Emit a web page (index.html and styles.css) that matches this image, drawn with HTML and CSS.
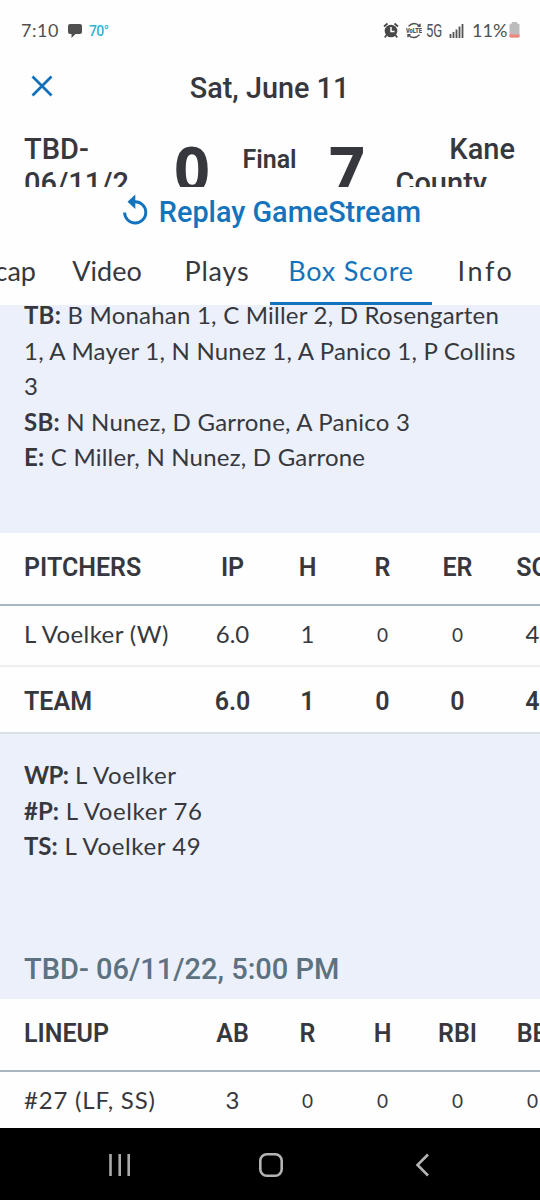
FILE: index.html
```html
<!DOCTYPE html>
<html lang="en">
<head>
<meta charset="utf-8">
<title>Box Score</title>
<link rel="stylesheet" href="styles.css">
</head>
<body>
<div class="phone">
  <header class="status">
    <span class="clock hand">7:10</span>
    <svg class="chat" width="16" height="16" viewBox="0 0 16 16"><path d="M3 1h10q2 0 2 2v6q0 2-2 2H8.500l-4 4v-4H3q-2 0-2-2V3q0-2 2-2z" fill="#505050"/></svg>
    <span class="temp">70°</span>
    <div class="status-right">
      <svg class="alarm" width="16" height="17" viewBox="0 0 16 17"><circle cx="8" cy="9" r="6.300" fill="#484848"/><path d="M1 4.500 4.500 1.500M15 4.500 11.500 1.500M3.500 13 1.800 15.500M12.500 13l1.700 2.500" stroke="#484848" stroke-width="1.700"/><path d="M8 5v4.500h3.500" fill="none" stroke="#fff" stroke-width="1.500"/></svg>
      <svg class="volte" width="16" height="17" viewBox="0 0 16 17"><path d="M2.500 4.200Q8-1.200 13.500 3.800M14 1.800v2.500h-2.500M13.500 12.800Q8 18.200 2.500 13.200M2 15.200v-2.500h2.500" fill="none" stroke="#505050" stroke-width="1.400"/><text x="0" y="10.800" textLength="16" lengthAdjust="spacingAndGlyphs" font-family="Roboto" font-size="6.500" font-weight="900" fill="#505050">VoLTE</text></svg>
      <span class="net">5G</span>
      <svg class="signal" width="15" height="15" viewBox="0 0 15 15"><path d="M1.500 15v-4M4.500 15V9M7.500 15V6.500M10.500 15V3.500M13.500 15V1" stroke="#555" stroke-width="1.800"/></svg>
      <span class="percent hand">11%</span>
      <svg class="battery" width="11" height="16" viewBox="0 0 11 16"><path d="M3 1.500V0h5v1.500h1q1.500 0 1.500 1.500v11.500q0 1-1.500 1H2q-1.500 0-1.500-1V3Q.5 1.500 2 1.500z" fill="#bcbcbc"/><path d="M.5 12.500h10v2q0 1-1.500 1H2q-1.500 0-1.500-1z" fill="#ef8478"/></svg>
    </div>
  </header>

  <div class="titlebar">
    <svg class="close" width="22" height="22" viewBox="0 0 22 22"><path d="M1.500 1.500 20.500 20.500M20.500 1.500 1.500 20.500" stroke="#1270b8" stroke-width="2.700"/></svg>
    <h1 class="title">Sat, June 11</h1>
  </div>

  <section class="score">
    <div class="team away">TBD-<br>06/11/2</div>
    <div class="runs">0</div>
    <div class="state">Final</div>
    <div class="runs">7</div>
    <div class="team home">Kane<br><span class="second">County</span></div>
  </section>

  <div class="replay">
    <svg class="replay-icon" width="26" height="31" viewBox="0 0 26 31"><path d="M2.600 18.500A10.600 10.600 0 1 0 13 7.800" fill="none" stroke="#1473bd" stroke-width="2.900"/><path d="M5.500 7.800 13.300.5v14.500z" fill="#1473bd"/></svg>
    <span class="replay-label">Replay GameStream</span>
  </div>

  <nav class="tabs hand">
    <span class="tab recap">Recap</span>
    <span class="tab video">Video</span>
    <span class="tab plays">Plays</span>
    <span class="tab active">Box Score</span>
    <span class="tab info">Info</span>
  </nav>

  <section class="notes batting hand">
    <div class="line l1"><b>TB:</b> B Monahan 1, C Miller 2, D Rosengarten</div>
    <div class="line l2">1, A Mayer 1, N Nunez 1, A Panico 1, P Collins</div>
    <div class="line">3</div>
    <div class="line l4"><b>SB:</b> N Nunez, D Garrone, A Panico 3</div>
    <div class="line l5"><b>E:</b> C Miller, N Nunez, D Garrone</div>
  </section>

  <section class="table">
    <div class="row head"><span class="name">PITCHERS</span><span>IP</span><span>H</span><span>R</span><span>ER</span><span>SO</span></div>
    <div class="row player hand"><span class="name voelker">L Voelker (W)</span><span class="decimal">6.0</span><span>1</span><span class="zero">0</span><span class="zero">0</span><span>4</span></div>
    <div class="row total"><span class="name">TEAM</span><span>6.0</span><span>1</span><span>0</span><span>0</span><span>4</span></div>
  </section>

  <section class="notes pitching hand">
    <div class="line p1"><b>WP:</b> L Voelker</div>
    <div class="line p2"><b>#P:</b> L Voelker 76</div>
    <div class="line p3"><b>TS:</b> L Voelker 49</div>
  </section>

  <h2 class="section-title">TBD- 06/11/22, 5:00 PM</h2>

  <section class="table lineup">
    <div class="row head"><span class="name">LINEUP</span><span>AB</span><span>R</span><span>H</span><span>RBI</span><span>BB</span></div>
    <div class="row player hand"><span class="name batter">#27 (LF, SS)</span><span>3</span><span class="zero">0</span><span class="zero">0</span><span class="zero">0</span><span class="zero">0</span></div>
  </section>

  <footer class="navbar">
    <svg width="24" height="24" viewBox="0 0 24 24"><path d="M2.500 1v22M11.700 1v22M20.700 1v22" stroke="#aaa" stroke-width="2.600"/></svg>
    <svg class="home-key" width="26" height="26" viewBox="0 0 26 26"><rect x="2.300" y="2.300" width="21.400" height="21.400" rx="6.500" fill="none" stroke="#b4b4b4" stroke-width="2.600"/></svg>
    <svg class="back-key" width="15" height="24" viewBox="0 0 15 24"><path d="M13 1.500 2.500 12 13 22.500" fill="none" stroke="#b4b4b4" stroke-width="2.600"/></svg>
  </footer>
</div>
</body>
</html>
```

FILE: styles.css
```css
* { box-sizing: border-box; }
body { margin: 0; background: #fefefe; color: #37383d; font-family: Roboto, sans-serif; }
.phone { width: 540px; height: 1200px; overflow: hidden; display: flex; flex-direction: column; background: #fefefe; white-space: nowrap; }
.phone > * { flex-shrink: 0; }
.hand { font-family: Lato, sans-serif; }
svg { display: block; flex: none; }

.status { height: 60px; display: flex; align-items: center; padding: 0 20px 0 21px; color: #505050; }
.clock { width: 46px; font-size: 18px; letter-spacing: 0.5px; }
.chat { margin-top: 1px; }
.temp { margin-left: 6px; padding-top: 2px; font-size: 14px; font-weight: 500; color: #32b2d3; letter-spacing: -0.6px; }
.status-right { margin-left: auto; display: flex; align-items: center; }
.volte { margin-left: 7px; }
.net { width: 16px; margin-left: 4px; font-size: 19px; transform: scaleX(0.69); transform-origin: left; }
.signal { margin-left: 7px; }
.percent { width: 35px; margin-left: 8px; font-size: 18px; }
.battery { margin-left: 2px; }

.titlebar { height: 60px; display: flex; align-items: center; padding: 0 31px 5px; }
.close { margin-top: -3px; }
.title { flex: 1; margin: 0 23px 0 0; text-align: center; font-size: 28.8px; font-weight: 500; }

.score { height: 67px; overflow: hidden; display: flex; padding: 12px 24px 0; }
.team { width: 127px; font-size: 29px; line-height: 34px; font-weight: 500; }
.home { text-align: right; }
.second { padding-right: 28px; }
.runs { width: 82px; font: 700 63px/71px "Noto Sans", sans-serif; text-align: center; }
.state { width: 73px; padding-top: 12px; font-size: 25px; line-height: 32px; font-weight: 600; text-align: center; }

.replay { height: 52px; display: flex; align-items: flex-start; justify-content: center; gap: 11px; padding: 7px 0 0 3px; color: #1473bd; font-size: 28.8px; line-height: 36px; font-weight: 500; }

.tabs { height: 66px; display: flex; font-size: 27px; line-height: 64px; }
.tab { height: 66px; text-align: center; }
.recap { width: 50px; padding-right: 14px; direction: rtl; }
.video { width: 114px; }
.plays { width: 106px; letter-spacing: 0.8px; }
.active { width: 162px; color: #1473bd; letter-spacing: 0.8px; border-bottom: 3px solid #1473bd; }
.info { width: 108px; letter-spacing: 2.6px; }

.notes { padding: 0 24px; background: #ebf0fa; font-size: 24px; line-height: 35.5px; letter-spacing: 0.22px; }
.batting { height: 228px; overflow: hidden; }
.batting .l1 { margin-top: -8px; }
.pitching { height: 200px; padding-top: 23px; letter-spacing: 0.6px; }
.pitching b { letter-spacing: -0.7px; }
.pitching .p2 b, .pitching .p3 b { letter-spacing: 0; }

.table { background: #fefefe; }
.row { display: grid; grid-template-columns: 171px repeat(5, 75px); padding-left: 24px; align-items: center; text-align: center; font-size: 25px; }
.name { text-align: left; }
.head { height: 73px; padding-bottom: 3px; font-weight: 600; border-bottom: 2px solid #a9b6c2; }
.player { height: 61px; padding-bottom: 5px; font-size: 24px; border-bottom: 2px solid #eeeff1; }
.voelker { letter-spacing: 0.4px; }
.batter { letter-spacing: 0.8px; }
.total { height: 67px; padding-top: 3px; font-weight: 600; border-bottom: 2px solid #d8dfe5; }
.zero { font-size: 19px; padding-top: 3px; }

.section-title { height: 65px; margin: 0; padding-left: 24px; background: #ebf0fa; color: #5c7280; font-size: 29px; line-height: 70px; font-weight: 500; }

.lineup { height: 129px; overflow: hidden; }
.navbar { height: 72px; background: #000; display: flex; align-items: center; padding: 2px 0 0 108px; }
.home-key { margin-left: 126px; }
.back-key { margin-left: 131px; }
```
